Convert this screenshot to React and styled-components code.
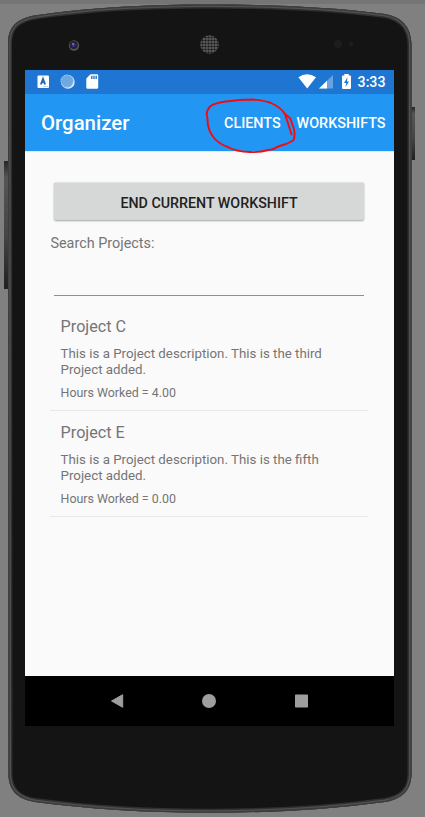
import React from "react";
import styled, { createGlobalStyle } from "styled-components";

const GlobalStyle = createGlobalStyle`
  * { box-sizing: border-box; }
  body { margin: 0; background: #808080; font-family: Roboto, sans-serif; }
`;

const Stage = styled.main`
  position: relative;
  width: 425px;
  height: 817px;
  overflow: hidden;
  padding: 70px 31px 91px 25px;
  background: linear-gradient(#757575 4px, #808080 4px);
`;

const Casing = styled.svg`
  position: absolute;
  inset: 0;
`;

const Screen = styled.div`
  position: relative;
  width: 369px;
  height: 656px;
  display: flex;
  flex-direction: column;
  background: #fafafa;
`;

const StatusBar = styled.div`
  height: 24px;
  flex: none;
  display: flex;
  align-items: center;
  justify-content: space-between;
  padding: 0 8.5px 0 12px;
  background: #1e76d2;
`;

const IconStrip = styled.svg`
  display: block;
  flex: none;
`;

const StatusRight = styled.div`
  display: flex;
  align-items: center;
  gap: 6px;
`;

const Clock = styled.span`
  font-size: 14.2px;
  font-weight: 500;
  line-height: 24px;
  color: #fff;
`;

const AppBar = styled.header`
  height: 57px;
  flex: none;
  display: flex;
  align-items: center;
  padding: 1px 8.5px 0 16px;
  background: #2196f3;
  color: #fff;
`;

const Title = styled.h1`
  margin: 0;
  flex: 1;
  font-size: 20.4px;
  font-weight: 500;
  line-height: 28px;
`;

const Actions = styled.nav`
  display: flex;
  gap: 16px;
`;

const Action = styled.a`
  padding-top: 1px;
  font-size: 14.35px;
  font-weight: 500;
  line-height: 20px;
`;

const Content = styled.section`
  flex: 1;
  padding: 32px 25px 0;
  border-top: 1px solid #d9e9f7;
  color: #757575;
`;

const WorkshiftButton = styled.button`
  display: block;
  width: 310px;
  height: 37px;
  margin: -1px 4px 0;
  padding: 2px 0 0;
  border: 0;
  border-radius: 2px;
  background: #d6d8d7;
  box-shadow: 0 0.5px 2px rgba(0, 0, 0, 0.35);
  font: 500 14.25px/20px Roboto, sans-serif;
  color: #212121;
`;

const SearchLabel = styled.label`
  display: block;
  margin-top: 14px;
  padding-left: 0.4px;
  font-size: 14.4px;
  line-height: 20px;
`;

const SearchInput = styled.input`
  display: block;
  width: 310px;
  height: 42px;
  margin: 0 4px;
  padding: 0;
  border: 0;
  border-bottom: 1px solid #8f8f8f;
  outline: 0;
  background: transparent;
  font: 16px Roboto, sans-serif;
`;

const ProjectList = styled.ul`
  margin: 9px 0 0;
  padding: 0;
  list-style: none;
`;

const ProjectItem = styled.li`
  width: 318px;
  height: 106px;
  padding: 11.4px 10px 0 10.6px;
  border-bottom: 1px solid #e8e8e8;
`;

const ProjectName = styled.h2`
  margin: 0;
  font-size: 16.2px;
  font-weight: 400;
  line-height: 22px;
`;

const Description = styled.p`
  width: 280px;
  margin: 7.6px 0 0;
  font-size: 13.3px;
  line-height: 16px;
`;

const Hours = styled.p`
  margin: 7px 0 0;
  font-size: 12.4px;
  line-height: 16px;
`;

const NavBar = styled.footer`
  height: 50px;
  flex: none;
  display: flex;
  align-items: center;
  justify-content: center;
  gap: 76px;
  padding-right: 1px;
  background: #000;
`;

const Annotation = styled.svg`
  position: absolute;
  left: 195px;
  top: 90px;
  pointer-events: none;
`;

const BODY =
  "M8 44 C8 26 17 18 38 15 C92 7 150 4.5 210 4.5 C272 4.5 333 7 385 14 C402 17 411 27 411.5 44 V774 C411 791 402 799 385 802 C325 810 270 812.7 210 812.7 C145 812.7 87 809 35 802 C17 799 8.5 790 8.5 774 Z";

const projects = [
  { name: "Project C", order: "third", hours: "4.00" },
  { name: "Project E", order: "fifth", hours: "0.00" },
];

function PhoneCasing() {
  return (
    <Casing width="425" height="817" viewBox="0 0 425 817" aria-hidden="true">
      <defs>
        <linearGradient id="key" x1="0" x2="0" y1="0" y2="1">
          <stop offset="0" stopColor="#252525" />
          <stop offset="0.13" stopColor="#555" />
          <stop offset="0.6" stopColor="#444" />
          <stop offset="1" stopColor="#202020" />
        </linearGradient>
        <pattern id="mesh" width="3" height="3" patternUnits="userSpaceOnUse">
          <rect width="3" height="3" fill="#5a5a5a" />
          <circle cx="1.5" cy="1.5" r="1.1" fill="#161616" />
        </pattern>
        <clipPath id="shell"><path d={BODY} /></clipPath>
      </defs>
      <rect x="4" y="161" width="5" height="128" fill="url(#key)" />
      <rect x="410" y="107" width="5" height="53" fill="url(#key)" />
      <g clipPath="url(#shell)">
        <path d={BODY} fill="#141414" stroke="#303030" strokeWidth="8" />
        <path d={BODY} fill="none" stroke="#505052" strokeWidth="5" />
        <path d={BODY} fill="none" stroke="#3c3c3c" strokeWidth="2.5" />
      </g>
      <circle cx="74" cy="45.5" r="5.2" fill="#555" />
      <circle cx="73.7" cy="45" r="4" fill="#24232b" />
      <circle cx="73.7" cy="45" r="2" fill="#37309a" />
      <circle cx="73" cy="44" r="0.8" fill="#b8b5d5" />
      <circle cx="209.5" cy="44.5" r="9.3" fill="url(#mesh)" />
      <circle cx="338" cy="44" r="4" fill="#1d1d1d" />
      <circle cx="351" cy="44" r="2.5" fill="#1d1d1d" />
    </Casing>
  );
}

function NotificationIcons() {
  return (
    <IconStrip width="64" height="24" viewBox="0 0 64 24" aria-hidden="true">
      <rect x="0.5" y="5.5" width="11.5" height="12.5" rx="1" fill="#fff" />
      <path d="M3.8 14.5 L6 8.7 L8.2 14.5 M4.6 12.5 H7.4" fill="none" stroke="#1e66b8" strokeWidth="1.7" />
      <path d="M6.5 16.5 H11" stroke="#8bb7e6" strokeWidth="1" strokeDasharray="1 1" />
      <circle cx="30.9" cy="11.9" r="6.8" fill="#e5f0fa" />
      <circle cx="30.1" cy="11.1" r="6.4" fill="#70a9e2" />
      <circle cx="30.1" cy="11.1" r="6.1" fill="none" stroke="#a9cced" strokeWidth="1" strokeDasharray="1.5 1" />
      <path d="M53.5 4.2 H60 Q61.2 4.2 61.2 5.4 V17.4 Q61.2 18.8 59.8 18.8 H50.7 Q49.3 18.8 49.3 17.4 V8.4 Z" fill="#fff" />
      <path d="M54.8 5.8 V9 M57 5.8 V9 M59.2 5.8 V9" stroke="#3577bf" strokeWidth="1.4" />
    </IconStrip>
  );
}

function SignalIcons() {
  return (
    <IconStrip width="54" height="24" viewBox="0 0 54 24" aria-hidden="true">
      <path d="M0.4 7.3 Q9 1 18 7.3 L9.2 18.5 Z" fill="#fff" />
      <path d="M35 5 V18.6 H21 Z" fill="#66a3df" />
      <path d="M29 10.8 V18.6 H21 Z" fill="#fff" />
      <path d="M46.3 4 H50.7 V5.5 H52 Q53 5.5 53 6.5 V18 Q53 19 52 19 H45 Q44 19 44 18 V6.5 Q44 5.5 45 5.5 H46.3 Z" fill="#fff" />
      <path d="M49.5 7.3 L46 12.9 H48.2 L47.5 17 L51 11.5 H48.9 Z" fill="#1e76d2" />
    </IconStrip>
  );
}

export default function App() {
  return (
    <Stage>
      <GlobalStyle />
      <PhoneCasing />
      <Screen>
        <StatusBar>
          <NotificationIcons />
          <StatusRight>
            <SignalIcons />
            <Clock>3:33</Clock>
          </StatusRight>
        </StatusBar>
        <AppBar>
          <Title>Organizer</Title>
          <Actions>
            <Action>CLIENTS</Action>
            <Action>WORKSHIFTS</Action>
          </Actions>
        </AppBar>
        <Content>
          <WorkshiftButton>END CURRENT WORKSHIFT</WorkshiftButton>
          <SearchLabel htmlFor="search">Search Projects:</SearchLabel>
          <SearchInput id="search" />
          <ProjectList>
            {projects.map((project) => (
              <ProjectItem key={project.name}>
                <ProjectName>{project.name}</ProjectName>
                <Description>
                  This is a Project description. This is the {project.order}
                  <br />
                  Project added.
                </Description>
                <Hours>Hours Worked = {project.hours}</Hours>
              </ProjectItem>
            ))}
          </ProjectList>
        </Content>
        <NavBar>
          <IconStrip width="16" height="16" viewBox="0 0 16 16">
            <path d="M13.7 1.7 V14.3 L2.5 8 Z" fill="#9e9e9e" stroke="#9e9e9e" strokeLinejoin="round" />
          </IconStrip>
          <IconStrip width="16" height="16" viewBox="0 0 16 16">
            <circle cx="8" cy="8" r="7" fill="#9e9e9e" />
          </IconStrip>
          <IconStrip width="16" height="16" viewBox="0 0 16 16">
            <rect x="2" y="1.5" width="13" height="13" rx="0.7" fill="#9e9e9e" />
          </IconStrip>
        </NavBar>
      </Screen>
      <Annotation width="110" height="70" viewBox="0 0 110 70" aria-hidden="true">
        <path
          d="M90 24 L95 28 Q97 33 98 36 Q101 44 98.3 50.5 L91 54 Q87 55 82 57 Q79 59.5 73 60 Q66 62.5 55 62 Q41 61.5 34 57.5 Q24 54 19 48 Q12 39 12.5 28 Q10 22 15.5 16 Q20 13 31 11.5 Q45 9.5 58 9.5 Q70 10.5 76 13 Q86 17.5 90 24 Q93 33 96.5 44.5"
          fill="none"
          stroke="#f50a10"
          strokeWidth="1.9"
          strokeLinecap="round"
          strokeLinejoin="round"
        />
      </Annotation>
    </Stage>
  );
}
